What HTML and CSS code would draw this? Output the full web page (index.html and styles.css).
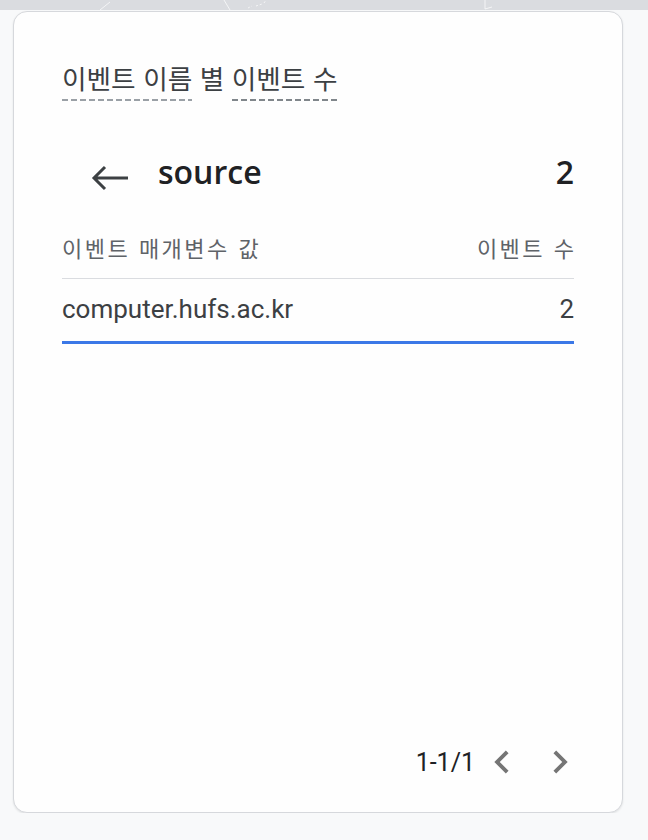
FILE: index.html
```html
<!DOCTYPE html>
<html lang="ko">
<head>
    <meta charset="UTF-8">
    <meta name="viewport" content="width=device-width, initial-scale=1.0">
    <title>이벤트 이름 별 이벤트 수</title>
    <link rel="stylesheet" href="styles.css">
</head>
<body>
    <div class="top-band">
        <svg class="band-lines" width="648" height="10" viewBox="0 0 648 10">
            <path d="M100 10 L110 2" />
            <path d="M224 0 L230 10" />
            <path d="M248 8 L252 6 M256 6 L262 4 M264 3 L266 0" stroke-dasharray="2 2" />
            <path d="M485 0 L485 9 L492 7" />
        </svg>
    </div>

    <div class="card">
        <h2 class="card-title">
            <span class="dim-link">이벤트 이름</span> 별 <span class="dim-link dark">이벤트 수</span>
        </h2>

        <div class="drill-row">
            <svg class="back-arrow" width="40" height="28" viewBox="0 0 40 28">
                <path d="M38 14 H5 M15 3 L4 14 L15 25" />
            </svg>
            <span class="drill-name">source</span>
            <span class="drill-total">2</span>
        </div>

        <div class="table">
            <div class="table-head">
                <span>이벤트 매개변수 값</span>
                <span>이벤트 수</span>
            </div>
            <div class="table-row">
                <span>computer.hufs.ac.kr</span>
                <span>2</span>
            </div>
        </div>

        <div class="pager">
            <span class="pager-count">1-1/1</span>
            <svg class="pager-btn" width="46" height="46" viewBox="0 0 24 24">
                <path d="M15.41 7.41L14 6l-6 6 6 6 1.41-1.41L10.83 12z" />
            </svg>
            <svg class="pager-btn" width="46" height="46" viewBox="0 0 24 24">
                <path d="M10 6L8.59 7.41 13.17 12l-4.58 4.59L10 18l6-6z" />
            </svg>
        </div>
    </div>
</body>
</html>
```

FILE: styles.css
```css
body, html {
    margin: 0;
    padding: 0;
    background-color: #f8f9fa;
    font-family: Roboto, "Noto Sans CJK KR", sans-serif;
    color: #3c4043;
}

.top-band {
    height: 10px;
    background-color: #dadce0;
}

.band-lines {
    display: block;
}

.band-lines path {
    fill: none;
    stroke: #ffffff;
    stroke-width: 1;
    opacity: 0.7;
}

.card {
    box-sizing: border-box;
    width: 610px;
    height: 802px;
    margin: 1px 0 0 13px;
    padding: 48px 48px 27px 48px;
    background-color: #fefefe;
    border: 1px solid #d6d8dc;
    border-radius: 14px;
    box-shadow: 0 1px 2px rgba(60, 64, 67, 0.12);
    display: flex;
    flex-direction: column;
}

.card-title {
    margin: 0;
    font-family: "Noto Sans CJK KR", sans-serif;
    font-size: 26.7px;
    font-weight: 400;
    line-height: 36px;
    color: #3c4043;
}

.dim-link {
    padding-bottom: 4px;
    background-image: repeating-linear-gradient(to right, #9aa0a6 0 6px, transparent 6px 9px);
    background-size: 100% 2px;
    background-position: 0 100%;
    background-repeat: no-repeat;
}

.dim-link.dark {
    background-image: repeating-linear-gradient(to right, #80868b 0 6px, transparent 6px 9px);
}

.drill-row {
    display: flex;
    align-items: center;
    margin-top: 55px;
    height: 40px;
}

.back-arrow {
    margin-left: 28px;
    margin-top: 14px;
}

.back-arrow path {
    fill: none;
    stroke: #3c4043;
    stroke-width: 3;
}

.drill-name {
    margin-left: 28px;
    font-family: "Open Sans", sans-serif;
    font-size: 32px;
    font-weight: 600;
    color: #202124;
}

.drill-total {
    margin-left: auto;
    font-family: "Open Sans", sans-serif;
    font-size: 32px;
    font-weight: 600;
    color: #202124;
}

.table {
    margin-top: 41px;
}

.table-head {
    display: flex;
    justify-content: space-between;
    font-family: "Noto Sans CJK KR", sans-serif;
    font-size: 22px;
    letter-spacing: 2.5px;
    line-height: 30px;
    color: #5f6368;
    padding-bottom: 16px;
    border-bottom: 1px solid #dadce0;
}

.table-head span:last-child {
    margin-right: -2.5px;
}

.table-row {
    display: flex;
    justify-content: space-between;
    font-size: 26px;
    line-height: 34px;
    color: #3c4043;
    padding-top: 13px;
    padding-bottom: 15px;
    border-bottom: 3px solid #3b78e7;
}

.pager {
    margin-top: auto;
    display: flex;
    justify-content: flex-end;
    align-items: center;
    margin-right: -9px;
}

.pager-count {
    font-size: 25px;
    color: #202124;
    margin-right: 4px;
}

.pager-btn {
    fill: #757575;
}

.pager-btn + .pager-btn {
    margin-left: 12px;
}
```
